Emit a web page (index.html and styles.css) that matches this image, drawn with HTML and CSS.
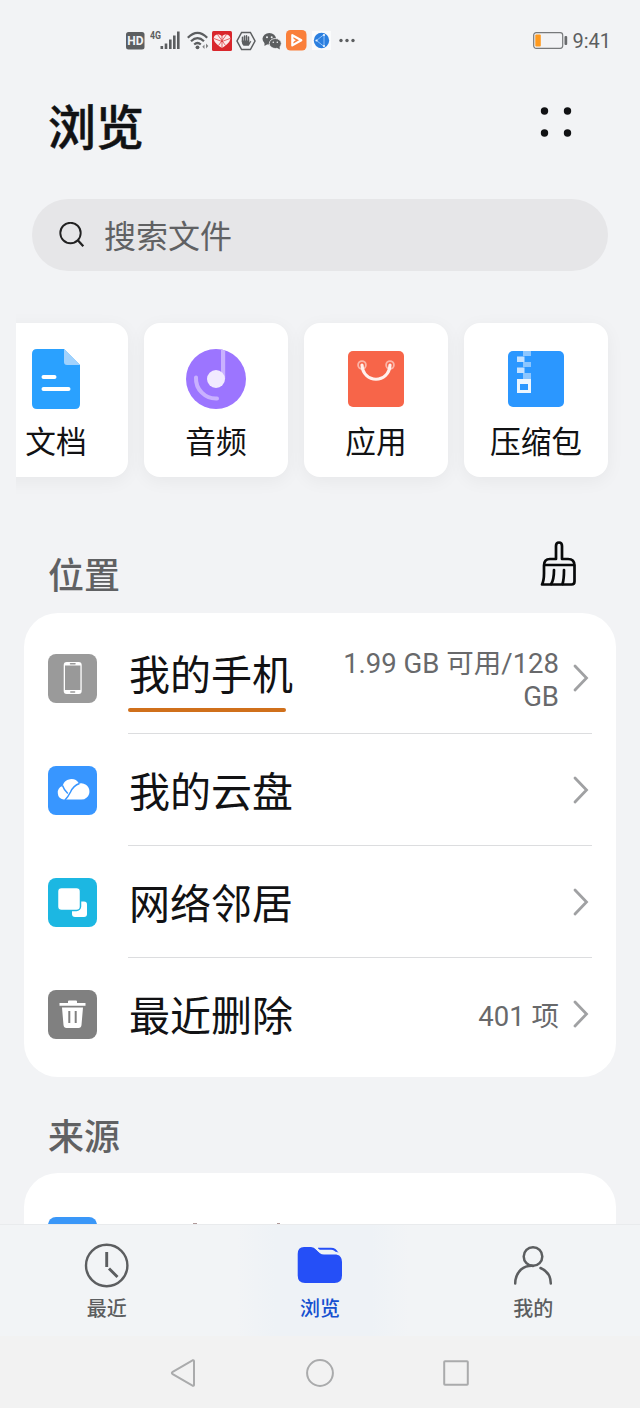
FILE: index.html
```html
<!DOCTYPE html>
<html lang="zh-CN">
<head>
<meta charset="utf-8">
<title>浏览</title>
<link rel="stylesheet" href="styles.css">
</head>
<body>
<div class="phone">
  <header class="status">
    <div class="status-icons">
      <svg width="19" height="18" viewBox="0 0 19 18"><rect width="18.500" height="17.500" rx="2.500" fill="#5c5e60"/><text x="9.300" y="13.300" text-anchor="middle" class="hd">HD</text></svg>
      <svg class="signal" width="32" height="22" viewBox="0 0 32 22"><text x="0" y="9" textLength="11" lengthAdjust="spacingAndGlyphs" class="net">4G</text><g fill="#5c5e60"><rect x="10.500" y="16" width="2.600" height="3"/><rect x="14.700" y="13.500" width="2.600" height="5.500"/><rect x="19" y="9.500" width="2.600" height="9.500"/><rect x="23" y="5.500" width="2.600" height="13.500"/><rect x="27" y="1.500" width="2.600" height="17.500"/></g></svg>
      <svg class="wifi" width="24" height="20" viewBox="0 0 24 20"><g fill="none" stroke="#5c5e60" stroke-width="2.200"><path d="M.8 6.800Q10.500 -3 20.200 6.800"/><path d="M4 10.200Q10.500 4 17 10.200"/><path d="M7.200 13.500Q10.500 10.500 13.800 13.500"/></g><circle cx="10.500" cy="16.300" r="1.900" fill="#5c5e60"/><path d="M17.500 13.500v4.500l-2.200-2.200zM19 12.500v5l2.300-2.500z" fill="#808284"/></svg>
      <svg class="heart" width="20" height="20" viewBox="0 0 20 20"><rect width="20" height="20" rx="1.500" fill="#d9262c"/><path d="M10 17C4.500 13.500 1.700 10.800 1.700 7.300C1.700 2.900 7.500 2.200 10 5.200C12.500 2.200 18.300 2.900 18.300 7.300C18.300 10.800 15.500 13.500 10 17Z" fill="#fbeaea"/><path d="M5.500 3.500L13.500 14.500M14.500 3.500L6.500 14.500M2 7.500L10 10.500L18 7.500M10 5V17" fill="none" stroke="#d9262c" stroke-width=".7"/></svg>
      <svg class="hand" width="20" height="20" viewBox="0 0 20 20"><path d="M5.600 1.500h8.800L19 10l-4.600 8.500H5.600L1 10z" fill="none" stroke="#5c5e60" stroke-width="1.500"/><path d="M6.500 10.500V6.300M8.500 10V5M10.500 10V4.800M12.500 10.500V6" stroke="#5c5e60" stroke-width="1.500" stroke-linecap="round"/><path d="M5.800 9.500H13.300V11.500L14.800 9.700L15.300 10.500L12.800 14.700H7.500Q5.800 13 5.800 11Z" fill="#5c5e60"/></svg>
      <svg class="wechat" width="20" height="18" viewBox="0 0 20 18"><g fill="#5c5e60"><ellipse cx="7.300" cy="6.800" rx="6.800" ry="5.800"/><path d="M2.500 9.500v4.500l4-2.500z"/><ellipse cx="13.300" cy="11.500" rx="6" ry="5" stroke="#f2f3f5" stroke-width=".8"/><path d="M14.500 15.500l3.300 2-.3-4z"/></g><g fill="#f2f3f5"><circle cx="5" cy="5.300" r="1"/><circle cx="9.700" cy="5.300" r="1"/><circle cx="11.300" cy="10.300" r=".8"/><circle cx="15.300" cy="10.300" r=".8"/></g></svg>
      <svg class="video" width="21" height="21" viewBox="0 0 21 21"><rect width="20.500" height="20.500" rx="4.500" fill="#fa7f3a"/><path d="M6.300 5.200L15.300 10.300L6.300 15.400Z" fill="#fa7f3a" stroke="#fff" stroke-width="2.200" stroke-linejoin="round"/><path d="M6.500 8L9.800 10.300L6.500 12.500Z" fill="#fff"/></svg>
      <svg class="globe" width="19" height="19" viewBox="0 0 19 19"><rect width="19" height="19" fill="#fafbfc"/><circle cx="9.500" cy="9.500" r="7.700" fill="#2b7fdf"/><path d="M4.500 9.500L12 3.500V15.500Z" fill="none" stroke="#a9d2ff" stroke-width=".8"/><g fill="#e6f2ff"><circle cx="4.500" cy="9.500" r="1.100"/><circle cx="12" cy="4" r="1.100"/><circle cx="12" cy="15" r="1.100"/></g></svg>
      <svg width="16" height="6" viewBox="0 0 16 6" fill="#5c5e60"><circle cx="2" cy="2.500" r="1.700"/><circle cx="8" cy="2.500" r="1.700"/><circle cx="14" cy="2.500" r="1.700"/></svg>
    </div>
    <div class="status-right">
      <svg width="35" height="17" viewBox="0 0 35 17"><rect x=".7" y=".7" width="29" height="15.600" rx="2.500" fill="none" stroke="#77797b" stroke-width="1.200"/><rect x="2.300" y="2.500" width="5.500" height="12" rx="1" fill="#ff9a1f"/><rect x="31.500" y="4" width="2.700" height="9" rx="1" fill="#696b6d"/></svg>
      <span>9:41</span>
    </div>
  </header>

  <div class="title-row">
    <h1>浏览</h1>
    <svg width="34" height="30" viewBox="0 0 34 30" fill="#111214"><circle cx="4.500" cy="4" r="3.700"/><circle cx="27.500" cy="4" r="3.700"/><circle cx="4.500" cy="26" r="3.700"/><circle cx="27.500" cy="26" r="3.700"/></svg>
  </div>

  <div class="search">
    <svg width="26" height="26" viewBox="0 0 26 26" fill="none" stroke="#222" stroke-width="1.900"><circle cx="11.500" cy="11" r="10.200"/><path d="M18.800 18.300L24.300 24.300" stroke-width="2.300"/></svg>
    <span>搜索文件</span>
  </div>

  <div class="strip">
    <div class="tile">
      <svg width="60" height="60" viewBox="0 0 60 60"><path d="M11 0H38L54 16V55Q54 60 49 60H11Q6 60 6 55V5Q6 0 11 0Z" fill="#2aa1ff"/><path d="M38 0L54 16H41Q38 16 38 13Z" fill="#a1d2fd"/><path d="M17.500 28H28.500M17.500 40H42.500" stroke="#fff" stroke-width="4" stroke-linecap="round"/></svg>
      <span>文档</span>
    </div>
    <div class="tile">
      <svg width="60" height="60" viewBox="0 0 60 60"><circle cx="30" cy="30" r="30" fill="#9c75ff"/><path d="M35 .4Q38 .8 39.200 1.500V30H35Z" fill="#c9b1ff"/><path d="M10 28.500A20 20 0 0 0 31 49.500" fill="none" stroke="#c9b1ff" stroke-width="4" stroke-linecap="round"/><circle cx="30" cy="30" r="9" fill="#f1eaff"/></svg>
      <span>音频</span>
    </div>
    <div class="tile">
      <svg width="60" height="60" viewBox="0 0 60 60"><rect x="2" y="2" width="56" height="56" rx="5" fill="#f76549"/><g fill="#f76549" stroke="#fbb5a7" stroke-width="1.800"><circle cx="16" cy="16" r="3.900"/><circle cx="44" cy="16" r="3.900"/></g><path d="M16 16C17 35 43 35 44 16" fill="none" stroke="#fff1ed" stroke-width="3.200" stroke-linecap="round"/></svg>
      <span>应用</span>
    </div>
    <div class="tile">
      <svg width="60" height="60" viewBox="0 0 60 60"><rect x="2" y="2" width="56" height="56" rx="5" fill="#2b97ff"/><g fill="#8cc6ff"><path d="M17 2h8v5h-8zM17 13h8v5h-8zM17 24h8v6h-8z"/></g><g fill="#c6e2ff"><path d="M11 7.500h7.500v5.500H11zM11 18.500h7.500V24H11z"/></g><path d="M11 30H25V44H11ZM14 35V41H22V35Z" fill="#edf6ff" fill-rule="evenodd"/></svg>
      <span>压缩包</span>
    </div>
  </div>

  <div class="section-head">
    <h2>位置</h2>
    <svg class="broom" width="38" height="47" viewBox="0 0 38 47" fill="none" stroke="#08090a" stroke-width="2.700" stroke-linecap="round" stroke-linejoin="round"><path d="M17 18V5Q17 1.500 20 1.500T23 5V18H29Q35.500 18 35.500 24.500V40.500Q35.500 43.500 32.500 43.500H3Q5 39.500 5 32.500V24.500Q5 18 11 18Z"/><path d="M5.500 24H35M15 29Q15 38.500 12.200 43M25 29Q25 38.500 23.500 43"/></svg>
  </div>

  <div class="list">
    <div class="row">
      <svg class="icon" width="49" height="49" viewBox="0 0 49 49"><rect width="49" height="49" rx="8" fill="#9a9a9a"/><rect x="15.700" y="8" width="18" height="32" rx="3" fill="#fff"/><rect x="17" y="11.500" width="15.400" height="24.500" fill="#999"/><path d="M22.500 9.800h4.500M22.800 38h3.800" stroke="#999" stroke-width="1.500" stroke-linecap="round"/></svg>
      <div class="row-body">
        <span class="label marked">我的手机</span>
        <span class="info">1.99 GB 可用/128 GB</span>
        <svg class="chev" width="16" height="28" viewBox="0 0 16 28"><path d="M2 2L13.500 14L2 26"/></svg>
      </div>
    </div>
    <div class="row">
      <svg class="icon" width="49" height="49" viewBox="0 0 49 49"><rect width="49" height="49" rx="8" fill="#3896ff"/><path d="M15.500 33.500A7 7 0 0 1 14.500 20A9 9 0 0 1 31 17.500A8.200 8.200 0 1 1 32 33.500Z" fill="#fff"/><path d="M14.500 19.500Q16 24 19.800 27.500M17 34Q20 31 22.500 26Q25.500 19.500 31.500 17.500" fill="none" stroke="#3896ff" stroke-width="1.500"/></svg>
      <div class="row-body">
        <span class="label">我的云盘</span>
        <svg class="chev" width="16" height="28" viewBox="0 0 16 28"><path d="M2 2L13.500 14L2 26"/></svg>
      </div>
    </div>
    <div class="row">
      <svg class="icon" width="49" height="49" viewBox="0 0 49 49"><rect width="49" height="49" rx="8" fill="#1cb7e2"/><rect x="24" y="23.500" width="15" height="15.500" rx="3" fill="#fff"/><rect x="9.500" y="9.500" width="23" height="23" rx="4" fill="#fff" stroke="#1cb7e2" stroke-width="1.500"/></svg>
      <div class="row-body">
        <span class="label">网络邻居</span>
        <svg class="chev" width="16" height="28" viewBox="0 0 16 28"><path d="M2 2L13.500 14L2 26"/></svg>
      </div>
    </div>
    <div class="row">
      <svg class="icon" width="49" height="49" viewBox="0 0 49 49"><rect width="49" height="49" rx="8" fill="#808080"/><path d="M11.500 13H20V11.500Q20 10.500 21 10.500H28Q29 10.500 29 11.500V13H37.500V15.700H11.500ZM14 17.500H35L33.500 35Q33.200 38 30.500 38H18.500Q15.800 38 15.500 35Z" fill="#fff"/><path d="M21.300 21V33M27.700 21V33" stroke="#808080" stroke-width="2"/></svg>
      <div class="row-body">
        <span class="label">最近删除</span>
        <span class="info">401 项</span>
        <svg class="chev" width="16" height="28" viewBox="0 0 16 28"><path d="M2 2L13.500 14L2 26"/></svg>
      </div>
    </div>
  </div>

  <div class="source">
    <h2>来源</h2>
    <div class="list">
      <div class="row">
        <svg class="icon" width="49" height="49" viewBox="0 0 49 49"><rect width="49" height="49" rx="8" fill="#3a97f8"/></svg>
        <div class="row-body">
          <svg class="peek" width="160" height="30" viewBox="0 0 160 30" fill="#b09a9a"><rect x="65" width="4" height="1"/><rect x="149" width="3" height="1"/></svg>
        </div>
      </div>
    </div>
  </div>

  <nav class="tabs">
    <div class="tab">
      <svg width="46" height="46" viewBox="0 0 46 46" fill="none" stroke="#5c5e60" stroke-width="2.400"><circle cx="22.700" cy="22.500" r="20.700"/><path d="M22.700 9V24M25 25.500L33.500 34" stroke-width="2.900"/></svg>
      <span>最近</span>
    </div>
    <div class="tab active">
      <svg width="46" height="46" viewBox="0 0 46 46"><path d="M7 4H14Q17 4 19.500 6.800L23 10.300Q24.500 11.500 27 11.500H40Q45 13 45 19V32.500Q45 40 37.500 40H8Q.7 40 .7 32.500V11Q.7 4 7 4Z" fill="#254ff7"/><path d="M21 5.700H34Q38.500 5.700 40.500 10.500" fill="none" stroke="#254ff7" stroke-width="2"/><path d="M17.500 3.500L22.500 8.200Q24 9.500 27 9.500H37Q40 9.500 42 11.500" fill="none" stroke="#eef3f7" stroke-width="2.200"/></svg>
      <span>浏览</span>
    </div>
    <div class="tab">
      <svg width="46" height="46" viewBox="0 0 46 46" fill="none" stroke="#5c5e60" stroke-width="2.500" stroke-linecap="round"><circle cx="23" cy="13.500" r="9.300"/><path d="M5.200 40.500Q5.200 32 11 26.500Q16 22.500 23 22.900M30.500 25Q40.800 29.500 40.800 40.500"/></svg>
      <span>我的</span>
    </div>
  </nav>

  <div class="sysnav">
    <svg width="28" height="30" viewBox="0 0 28 30"><path d="M2.700 13.800L22.500 2.300Q24 1.700 24 3.300V26.700Q24 28.300 22.500 27.700L2.700 16.200Q1 15 2.700 13.800Z"/></svg>
    <svg width="28" height="28" viewBox="0 0 28 28"><circle cx="14" cy="14" r="12.900"/></svg>
    <svg width="28" height="28" viewBox="0 0 28 28"><rect x="2.200" y="2.200" width="23.600" height="23.600" rx=".8"/></svg>
  </div>
</div>
</body>
</html>
```
FILE: styles.css
```css
* { box-sizing: border-box; }

body {
  margin: 0;
  background: #f2f3f5;
  font-family: Roboto, "Noto Sans CJK SC", sans-serif;
  color: #111214;
}

svg { display: block; flex: none; }

h1, h2 { margin: 0; }

.phone {
  width: 640px;
  height: 1408px;
  display: flex;
  flex-direction: column;
  overflow: hidden;
}

.phone > * { flex: none; }

.status {
  height: 82px;
  padding: 0 29px 1px 126px;
  display: flex;
  align-items: center;
  justify-content: space-between;
}

.status-icons { display: flex; align-items: center; }
.signal { margin-left: 5px; }
.wifi { margin-left: 5px; }
.heart { margin-left: 1px; }
.hand { margin-left: 4px; }
.wechat { margin-left: 6px; }
.video { margin-left: 4px; }
.globe { margin: 0 8px 0 5px; }

.hd { font: 700 12px Roboto, sans-serif; fill: #f2f3f5; }
.net { font: 700 11px Roboto, sans-serif; fill: #5c5e60; }

.status-right {
  display: flex;
  align-items: center;
  gap: 4px;
  font-size: 20px;
  line-height: 24px;
  color: #5c5e60;
}

.status-right span { padding-top: 1px; }

.title-row {
  height: 90px;
  padding: 0 66px 0 48px;
  display: flex;
  align-items: center;
  justify-content: space-between;
}

.title-row h1 {
  padding-top: 3px;
  font-size: 48px;
  line-height: 60px;
  font-weight: 500;
  -webkit-text-stroke: .5px #111214;
}

.title-row svg { margin-bottom: 10px; }

.search {
  height: 72px;
  margin: 27px 32px 0;
  padding: 0 27px;
  border-radius: 36px;
  background: #e6e6e8;
  display: flex;
  align-items: center;
  gap: 19px;
  font-size: 32px;
  line-height: 40px;
  color: #606163;
}

.search span { padding-top: 4px; }

.strip {
  height: 208px;
  margin: 28px 0 0 16px;
  padding-top: 24px;
  display: flex;
  align-items: flex-start;
  gap: 16px;
  overflow: hidden;
}

.tile {
  flex: none;
  width: 144px;
  height: 154px;
  padding-top: 26px;
  border-radius: 16px;
  background: #fff;
  box-shadow: 0 4px 18px rgba(0, 0, 0, .05);
  display: flex;
  flex-direction: column;
  align-items: center;
  gap: 14px;
  font-size: 30.7px;
  line-height: 40px;
}

.tile:first-child { margin-left: -32px; }

.section-head {
  height: 106px;
  padding: 34px 63px 0 48px;
  display: flex;
  align-items: flex-start;
  justify-content: space-between;
}

h2 {
  font-size: 36px;
  line-height: 50px;
  font-weight: 500;
  color: #606163;
}

.section-head h2 { margin-top: 11px; }

.list {
  margin: 0 24px;
  padding: 9px 24px 7px;
  border-radius: 34px;
  background: #fff;
}

.row {
  height: 112px;
  display: flex;
  align-items: center;
  gap: 31px;
}

.row-body {
  flex: 1;
  height: 100%;
  padding-right: 3px;
  border-bottom: 1px solid #dcdddf;
  display: flex;
  align-items: center;
}

.row:last-child .row-body { border-bottom: 0; }

.label {
  flex: none;
  padding: 6px 0 0 1px;
  font-size: 41px;
  line-height: 56px;
}

.marked {
  height: 66px;
  margin-top: 2px;
  padding-top: 2px;
  display: flex;
  flex-direction: column;
  justify-content: space-between;
}

.marked::after {
  content: "";
  width: 158px;
  height: 4px;
  margin-left: -1px;
  border-radius: 2px;
  background: #d0701b;
}

.info {
  flex: 1;
  margin: 5px 14px 0 28px;
  text-align: right;
  font-size: 27.5px;
  line-height: 33px;
  color: #68696b;
}

.label + .chev { margin-left: auto; }

.chev path { fill: none; stroke: #a0a1a3; stroke-width: 2.8; stroke-linecap: round; }

.source { height: 147px; overflow: hidden; }
.source h2 { padding: 36px 48px 10px; }
.source .list { padding-top: 12px; }
.peek { align-self: flex-start; margin-top: 38px; }

.tabs {
  height: 112px;
  background: linear-gradient(90deg, #f2f4f6 37%, #eef2f6 43%, #eef2f6 58%, #f2f4f6 64%);
  border-top: 1px solid #e9ebed;
  display: flex;
}

.tab {
  flex: 1;
  padding-top: 18px;
  display: flex;
  flex-direction: column;
  align-items: center;
  gap: 6px;
  font-size: 20px;
  line-height: 28px;
  font-weight: 500;
  color: #5c5e60;
}

.active { color: #1550d0; }

.sysnav {
  height: 72px;
  padding-top: 1px;
  background: #f2f2f2;
  display: flex;
  align-items: center;
  justify-content: center;
  gap: 108px;
}

.sysnav svg { fill: none; stroke: #aaabac; stroke-width: 2; }
```
